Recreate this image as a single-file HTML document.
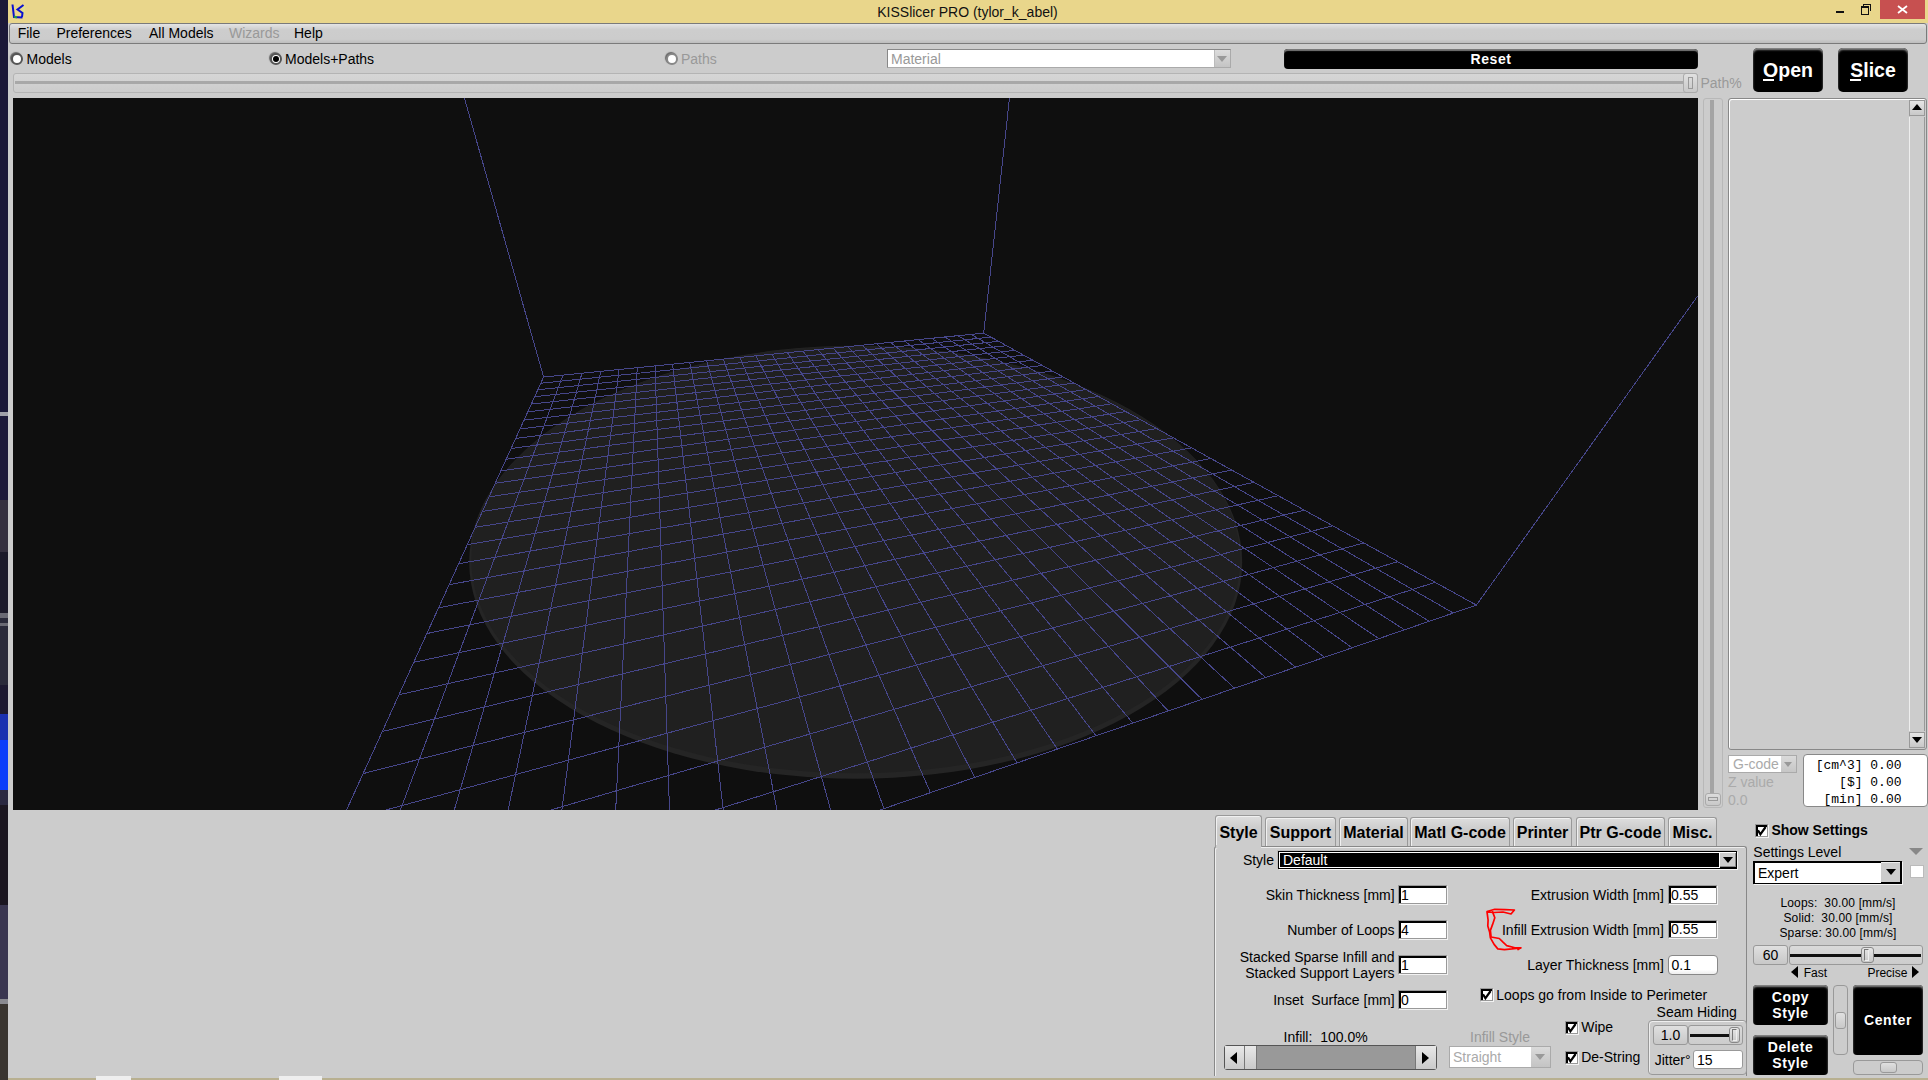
<!DOCTYPE html><html><head><meta charset="utf-8"><style>
html,body{margin:0;padding:0}
body{width:1928px;height:1080px;overflow:hidden;position:relative;background:#cccccc;font-family:"Liberation Sans", sans-serif}
.a{position:absolute;box-sizing:border-box}
.t{position:absolute;white-space:pre}
</style></head><body>
<div class="a" style="left:0px;top:0px;width:8px;height:412px;background:#1b1838"></div>
<div class="a" style="left:0px;top:412px;width:8px;height:4px;background:#a0a0a8"></div>
<div class="a" style="left:0px;top:416px;width:8px;height:84px;background:#1e1a3a"></div>
<div class="a" style="left:0px;top:500px;width:8px;height:52px;background:#35303f"></div>
<div class="a" style="left:0px;top:552px;width:8px;height:61px;background:#1c1a2a"></div>
<div class="a" style="left:0px;top:613px;width:8px;height:5px;background:#6a6a74"></div>
<div class="a" style="left:0px;top:618px;width:8px;height:5px;background:#2a2a3a"></div>
<div class="a" style="left:0px;top:623px;width:8px;height:3px;background:#6a6a74"></div>
<div class="a" style="left:0px;top:626px;width:8px;height:59px;background:#2a2a3a"></div>
<div class="a" style="left:0px;top:685px;width:8px;height:29px;background:#1c1830"></div>
<div class="a" style="left:0px;top:714px;width:8px;height:26px;background:#1a30b0"></div>
<div class="a" style="left:0px;top:740px;width:8px;height:50px;background:#0b3dfa"></div>
<div class="a" style="left:0px;top:790px;width:8px;height:15px;background:#2a2840"></div>
<div class="a" style="left:0px;top:805px;width:8px;height:100px;background:#1b1620"></div>
<div class="a" style="left:0px;top:905px;width:8px;height:94px;background:#3a3650"></div>
<div class="a" style="left:0px;top:999px;width:8px;height:5px;background:#8a8a90"></div>
<div class="a" style="left:0px;top:1004px;width:8px;height:76px;background:#3a3530"></div>
<div class="a" style="left:8px;top:0px;width:1920px;height:23px;background:#e9d68b"></div>
<div class="a" style="left:1880px;top:0px;width:45px;height:19px;background:#c75050"></div>
<div class="t" style="left:667.5px;width:600px;text-align:center;top:4.75px;font-size:14px;line-height:14px;font-weight:normal;color:#111;font-family:'Liberation Sans', sans-serif;">KISSlicer PRO (tylor_k_abel)</div>
<div class="a" style="left:1836px;top:11px;width:8px;height:2px;background:#111"></div>
<svg class="a" style="left:1860px;top:3px" width="14" height="13" shape-rendering="crispEdges"><path d="M1.5 3.5 H8.5 V11.5 H1.5 Z" stroke="#111" stroke-width="1" fill="none"/><path d="M1 3 H9 V5 H1 Z" fill="#111"/><path d="M3.5 3 V1.5 H10.5 V8 " stroke="#111" stroke-width="1" fill="none"/></svg>
<svg class="a" style="left:1880px;top:0px" width="45" height="19"><path d="M18 6 L27 13 M27 6 L18 13" stroke="#fff" stroke-width="1.8" fill="none"/></svg>
<svg class="a" style="left:8px;top:0px" width="20" height="22"><path d="M16 6 L15 15" stroke="#e0e890" stroke-width="3" opacity="0.6"/><path d="M4.5 4.5 L6 17 L14.5 17.5" stroke="#0a10d0" stroke-width="2" fill="none"/><path d="M15.5 5 L9.5 9.5 L14.5 13 L14 17" stroke="#0a10d0" stroke-width="2" fill="none"/><path d="M6 16.5 L9 17.5" stroke="#20a040" stroke-width="2"/></svg>
<div class="a" style="left:9px;top:23px;width:1918px;height:21px;background:linear-gradient(#e4e4e4,#cdcdcd 30%,#cccccc 80%,#bdbdbd);border:1px solid #7a7a7a;border-radius:3px"></div>
<div class="t" style="left:17.7px;top:25.85px;font-size:14px;line-height:14px;font-weight:normal;color:#000;font-family:'Liberation Sans', sans-serif;">File</div>
<div class="t" style="left:56.4px;top:25.85px;font-size:14px;line-height:14px;font-weight:normal;color:#000;font-family:'Liberation Sans', sans-serif;">Preferences</div>
<div class="t" style="left:149px;top:25.85px;font-size:14px;line-height:14px;font-weight:normal;color:#000;font-family:'Liberation Sans', sans-serif;">All Models</div>
<div class="t" style="left:229px;top:25.85px;font-size:14px;line-height:14px;font-weight:normal;color:#999;font-family:'Liberation Sans', sans-serif;">Wizards</div>
<div class="t" style="left:294px;top:25.85px;font-size:14px;line-height:14px;font-weight:normal;color:#000;font-family:'Liberation Sans', sans-serif;">Help</div>
<div class="a" style="left:10.5px;top:52.5px;width:12px;height:12px;border-radius:50%;background:#fff;border:2px solid #555;box-shadow:-1px -1px 1px #666"></div>
<div class="t" style="left:26.5px;top:51.75px;font-size:14px;line-height:14px;font-weight:normal;color:#000;font-family:'Liberation Sans', sans-serif;">Models</div>
<div class="a" style="left:269.5px;top:52.5px;width:12px;height:12px;border-radius:50%;background:#fff;border:2px solid #555;box-shadow:-1px -1px 1px #666"></div>
<div class="a" style="left:272.5px;top:55.5px;width:6px;height:6px;border-radius:50%;background:#000"></div>
<div class="t" style="left:285px;top:51.75px;font-size:14px;line-height:14px;font-weight:normal;color:#000;font-family:'Liberation Sans', sans-serif;">Models+Paths</div>
<div class="a" style="left:665.5px;top:52.5px;width:12px;height:12px;border-radius:50%;background:#fff;border:2px solid #888;box-shadow:-1px -1px 1px #666"></div>
<div class="t" style="left:681px;top:51.75px;font-size:14px;line-height:14px;font-weight:normal;color:#999;font-family:'Liberation Sans', sans-serif;">Paths</div>
<div class="a" style="left:887px;top:49px;width:344px;height:19px;background:#fff;border:1px solid #aaa;border-top-color:#888;border-left-color:#888"></div>
<div class="a" style="left:1214px;top:50px;width:16px;height:17px;background:linear-gradient(#dcdcdc,#c4c4c4);border-left:1px solid #bbb"></div>
<div class="a" style="left:1217px;top:56px;width:0;height:0;border-left:5px solid transparent;border-right:5px solid transparent;border-top:6px solid #999"></div>
<div class="t" style="left:891px;top:51.75px;font-size:14px;line-height:14px;font-weight:normal;color:#999;font-family:'Liberation Sans', sans-serif;">Material</div>
<div class="a" style="left:1284px;top:49px;width:414px;height:20px;background:#000;border-radius:4px;box-shadow:inset 0 2px 1px #777"></div>
<div class="t" style="left:1191px;width:600px;text-align:center;top:52.15px;font-size:14px;line-height:14px;font-weight:bold;color:#fff;font-family:'Liberation Sans', sans-serif;letter-spacing:0.6px">Reset</div>
<div class="a" style="left:13px;top:73px;width:1685px;height:20px;border:1px solid #b4b4b4;border-radius:3px;background:linear-gradient(#d6d6d6,#cccccc)"></div>
<div class="a" style="left:15px;top:81px;width:1675px;height:3px;background:#a8a8a8"></div>
<div class="a" style="left:1683px;top:73px;width:15px;height:20px;border:1px solid #aaa;border-radius:3px;background:linear-gradient(#e0e0e0,#c8c8c8)"></div>
<div class="a" style="left:1688px;top:77px;width:5px;height:12px;border:1px solid #999"></div>
<div class="t" style="left:1700.5px;top:76.15px;font-size:14px;line-height:14px;font-weight:normal;color:#999;font-family:'Liberation Sans', sans-serif;">Path%</div>
<div class="a" style="left:1753px;top:48px;width:70px;height:44px;background:#000;border-radius:5px;box-shadow:inset 0 2px 2px #888"></div>
<div class="a" style="left:1838px;top:48px;width:70px;height:44px;background:#000;border-radius:5px;box-shadow:inset 0 2px 2px #888"></div>
<div class="t" style="left:1488px;width:600px;text-align:center;top:60.79px;font-size:19.5px;line-height:19.5px;font-weight:bold;color:#fff;font-family:'Liberation Sans', sans-serif;">Open</div>
<div class="a" style="left:1763px;top:79px;width:11px;height:2px;background:#fff"></div>
<div class="t" style="left:1573px;width:600px;text-align:center;top:60.79px;font-size:19.5px;line-height:19.5px;font-weight:bold;color:#fff;font-family:'Liberation Sans', sans-serif;">Slice</div>
<div class="a" style="left:1850px;top:79px;width:11px;height:2px;background:#fff"></div>
<svg class="a" style="left:13px;top:98px" width="1685" height="712" viewBox="0 0 1685 712"><rect width="1685" height="712" fill="#0f0f0f"/><ellipse cx="842.7" cy="464.20000000000005" rx="386.5" ry="216.5" fill="#252525"/><ellipse cx="842.7" cy="461.70000000000005" rx="384.5" ry="213.5" fill="#202020"/><path d="M530.60 279.00L234.70 929.20M530.60 279.00L970.70 235.10M549.97 277.07L316.78 901.00M527.77 285.22L977.99 239.12M569.01 275.17L393.73 874.57M524.78 291.78L985.60 243.32M587.73 273.30L466.02 849.73M521.62 298.72L993.55 247.71M606.13 271.47L534.06 826.36M518.28 306.07L1001.87 252.31M624.23 269.66L598.21 804.32M514.73 313.87L1010.59 257.12M642.03 267.88L658.80 783.51M510.96 322.16L1019.74 262.17M659.54 266.14L716.12 763.81M506.94 330.98L1029.34 267.47M676.76 264.42L770.43 745.16M502.66 340.40L1039.43 273.04M693.71 262.73L821.95 727.46M498.08 350.46L1050.05 278.91M710.38 261.07L870.89 710.65M493.17 361.25L1061.25 285.09M726.79 259.43L917.45 694.65M487.89 372.85L1073.06 291.61M742.95 257.82L961.79 679.42M482.21 385.33L1085.55 298.51M758.85 256.23L1004.08 664.89M476.07 398.83L1098.77 305.80M774.50 254.67L1044.44 651.03M469.41 413.45L1112.80 313.55M789.92 253.13L1083.00 637.78M462.18 429.35L1127.69 321.77M805.09 251.62L1119.89 625.11M454.28 446.71L1143.54 330.52M820.04 250.13L1155.22 612.97M445.62 465.72L1160.45 339.85M834.77 248.66L1189.07 601.34M436.10 486.66L1178.52 349.83M849.27 247.21L1221.54 590.19M425.56 509.81L1197.88 360.52M863.56 245.79L1252.71 579.48M413.85 535.55L1218.67 371.99M877.64 244.38L1282.66 569.19M400.74 564.34L1241.05 384.35M891.52 243.00L1311.46 559.30M385.99 596.76L1265.21 397.69M905.19 241.63L1339.17 549.78M369.25 633.54L1291.39 412.14M918.67 240.29L1365.86 540.61M350.10 675.62L1319.83 427.84M931.96 238.96L1391.57 531.78M327.97 724.24L1350.84 444.96M945.05 237.66L1416.37 523.26M302.12 781.05L1384.80 463.71M957.97 236.37L1440.30 515.04M271.51 848.31L1422.14 484.32M970.70 235.10L1463.40 507.10M234.70 929.20L1463.40 507.10M530.60 279.00L451.40 0M970.70 235.10L996.50 0M1463.40 507.10L1684.60 198.10" stroke="#46468a" stroke-width="1" fill="none" shape-rendering="crispEdges"/></svg>
<div class="a" style="left:1703px;top:98px;width:20px;height:710px;border:1px solid #b8b8b8;border-radius:3px;background:#cccccc"></div>
<div class="a" style="left:1710px;top:100px;width:4px;height:695px;background:#a4a4a4"></div>
<div class="a" style="left:1705px;top:793px;width:16px;height:13px;border:1px solid #aaa;border-radius:3px;background:linear-gradient(#dcdcdc,#c8c8c8)"></div>
<div class="a" style="left:1708px;top:797px;width:10px;height:4px;border:1px solid #999"></div>
<div class="a" style="left:1728px;top:98px;width:199px;height:652px;border:1px solid #888;border-radius:3px;background:#cccccc;box-shadow:inset 1px 1px 0 #fff"></div>
<div class="a" style="left:1909px;top:100px;width:16px;height:16px;border:1px solid #999;background:linear-gradient(#e6e6e6,#c8c8c8)"></div>
<div class="a" style="left:1912px;top:104px;width:0;height:0;border-left:5px solid transparent;border-right:5px solid transparent;border-bottom:6px solid #000"></div>
<div class="a" style="left:1909px;top:117px;width:16px;height:614px;border-left:1px solid #eee;border-right:1px solid #999;background:#cccccc"></div>
<div class="a" style="left:1909px;top:732px;width:16px;height:16px;border:1px solid #999;background:linear-gradient(#e6e6e6,#c8c8c8)"></div>
<div class="a" style="left:1912px;top:737px;width:0;height:0;border-left:5px solid transparent;border-right:5px solid transparent;border-top:6px solid #000"></div>
<div class="a" style="left:1728px;top:755px;width:69px;height:18px;background:#fff;border:1px solid #aaa"></div>
<div class="a" style="left:1781px;top:756px;width:15px;height:16px;background:linear-gradient(#dadada,#c6c6c6)"></div>
<div class="a" style="left:1784px;top:762px;width:0;height:0;border-left:4px solid transparent;border-right:4px solid transparent;border-top:5px solid #999"></div>
<div class="t" style="left:1733px;top:757.15px;font-size:14px;line-height:14px;font-weight:normal;color:#aaa;font-family:'Liberation Sans', sans-serif;">G-code</div>
<div class="t" style="left:1728px;top:775.15px;font-size:14px;line-height:14px;font-weight:normal;color:#aaa;font-family:'Liberation Sans', sans-serif;">Z value</div>
<div class="t" style="left:1728px;top:792.55px;font-size:14px;line-height:14px;font-weight:normal;color:#aaa;font-family:'Liberation Sans', sans-serif;">0.0</div>
<div class="a" style="left:1803px;top:754px;width:125px;height:53px;background:#fff;border:1px solid #888;border-radius:4px"></div>
<div class="t" style="right:26.5px;top:758.50px;font-size:13px;line-height:13px;font-weight:normal;color:#000;font-family:'Liberation Mono', monospace;">[cm^3] 0.00</div>
<div class="t" style="right:26.5px;top:775.50px;font-size:13px;line-height:13px;font-weight:normal;color:#000;font-family:'Liberation Mono', monospace;">[$] 0.00</div>
<div class="t" style="right:26.5px;top:792.80px;font-size:13px;line-height:13px;font-weight:normal;color:#000;font-family:'Liberation Mono', monospace;">[min] 0.00</div>
<div class="a" style="left:1755px;top:823.5px;width:13px;height:13.0px;background:#fff;border:1px solid #999;box-shadow:inset 2px 2px 0 #000,1px 1px 0 #f2f2f2"></div>
<svg class="a" style="left:1755px;top:823.5px" width="13" height="13"><path d="M3 6.3 L5.4 10.3 L10.6 3" stroke="#000" stroke-width="2.2" fill="none"/></svg>
<div class="t" style="left:1771.4px;top:823.15px;font-size:14px;line-height:14px;font-weight:bold;color:#000;font-family:'Liberation Sans', sans-serif;">Show Settings</div>
<div class="a" style="left:1214px;top:846px;width:533px;height:230px;border:1px solid #888;border-bottom:none;border-radius:3px 3px 0 0;box-shadow:inset 1px 1px 0 #eee"></div>
<div class="a" style="left:1215px;top:815px;width:47px;height:32px;border:1px solid #999;border-bottom:none;border-radius:3px 3px 0 0;background:linear-gradient(#dedede,#cccccc 40%);box-shadow:inset 1px 1px 0 #f0f0f0"></div>
<div class="t" style="left:938.5px;width:600px;text-align:center;top:824.66px;font-size:16px;line-height:16px;font-weight:bold;color:#000;font-family:'Liberation Sans', sans-serif;">Style</div>
<div class="a" style="left:1265px;top:817px;width:71px;height:29px;border:1px solid #999;border-bottom:none;border-radius:3px 3px 0 0;background:linear-gradient(#dedede,#cccccc 40%);box-shadow:inset 1px 1px 0 #f0f0f0"></div>
<div class="t" style="left:1000.5px;width:600px;text-align:center;top:824.66px;font-size:16px;line-height:16px;font-weight:bold;color:#000;font-family:'Liberation Sans', sans-serif;">Support</div>
<div class="a" style="left:1339px;top:817px;width:69px;height:29px;border:1px solid #999;border-bottom:none;border-radius:3px 3px 0 0;background:linear-gradient(#dedede,#cccccc 40%);box-shadow:inset 1px 1px 0 #f0f0f0"></div>
<div class="t" style="left:1073.5px;width:600px;text-align:center;top:824.66px;font-size:16px;line-height:16px;font-weight:bold;color:#000;font-family:'Liberation Sans', sans-serif;">Material</div>
<div class="a" style="left:1410px;top:817px;width:100px;height:29px;border:1px solid #999;border-bottom:none;border-radius:3px 3px 0 0;background:linear-gradient(#dedede,#cccccc 40%);box-shadow:inset 1px 1px 0 #f0f0f0"></div>
<div class="t" style="left:1160.0px;width:600px;text-align:center;top:824.66px;font-size:16px;line-height:16px;font-weight:bold;color:#000;font-family:'Liberation Sans', sans-serif;">Matl G-code</div>
<div class="a" style="left:1513px;top:817px;width:59px;height:29px;border:1px solid #999;border-bottom:none;border-radius:3px 3px 0 0;background:linear-gradient(#dedede,#cccccc 40%);box-shadow:inset 1px 1px 0 #f0f0f0"></div>
<div class="t" style="left:1242.5px;width:600px;text-align:center;top:824.66px;font-size:16px;line-height:16px;font-weight:bold;color:#000;font-family:'Liberation Sans', sans-serif;">Printer</div>
<div class="a" style="left:1576px;top:817px;width:89px;height:29px;border:1px solid #999;border-bottom:none;border-radius:3px 3px 0 0;background:linear-gradient(#dedede,#cccccc 40%);box-shadow:inset 1px 1px 0 #f0f0f0"></div>
<div class="t" style="left:1320.5px;width:600px;text-align:center;top:824.66px;font-size:16px;line-height:16px;font-weight:bold;color:#000;font-family:'Liberation Sans', sans-serif;">Ptr G-code</div>
<div class="a" style="left:1668px;top:817px;width:49px;height:29px;border:1px solid #999;border-bottom:none;border-radius:3px 3px 0 0;background:linear-gradient(#dedede,#cccccc 40%);box-shadow:inset 1px 1px 0 #f0f0f0"></div>
<div class="t" style="left:1392.5px;width:600px;text-align:center;top:824.66px;font-size:16px;line-height:16px;font-weight:bold;color:#000;font-family:'Liberation Sans', sans-serif;">Misc.</div>
<div class="a" style="left:1216px;top:845px;width:45px;height:3px;background:#cccccc"></div>
<div class="t" style="right:654px;top:852.65px;font-size:14px;line-height:14px;font-weight:normal;color:#000;font-family:'Liberation Sans', sans-serif;">Style</div>
<div class="a" style="left:1278px;top:851px;width:459px;height:18px;background:#000;border:1px solid #000;box-shadow:1px 1px 0 #f4f4f4,-1px -1px 0 #bbb"></div>
<div class="a" style="left:1279px;top:852px;width:457px;height:1px;background:#fff"></div>
<div class="a" style="left:1279px;top:852px;width:1px;height:16px;background:#fff"></div>
<div class="a" style="left:1279px;top:867px;width:441px;height:1px;background:#fff"></div>
<div class="a" style="left:1719px;top:852px;width:1px;height:16px;background:#fff"></div>
<div class="a" style="left:1720px;top:853px;width:16px;height:14px;background:#cccccc;box-shadow:inset -1px -1px 0 #888"></div>
<div class="a" style="left:1722.5px;top:857px;width:0;height:0;border-left:5px solid transparent;border-right:5px solid transparent;border-top:6px solid #000"></div>
<div class="t" style="left:1283px;top:852.65px;font-size:14px;line-height:14px;font-weight:normal;color:#fff;font-family:'Liberation Sans', sans-serif;">Default</div>
<div class="t" style="right:533.4000000000001px;top:888.15px;font-size:14px;line-height:14px;font-weight:normal;color:#000;font-family:'Liberation Sans', sans-serif;">Skin Thickness [mm]</div>
<div class="a" style="left:1398px;top:885px;width:49px;height:19px;background:#fff;border:1px solid #999;box-shadow:inset 2px 2px 0 #000,1px 1px 0 #f2f2f2"></div>
<div class="t" style="left:1401px;top:887.65px;font-size:14px;line-height:14px;font-weight:normal;color:#000;font-family:'Liberation Sans', sans-serif;">1</div>
<div class="t" style="right:533.4000000000001px;top:923.15px;font-size:14px;line-height:14px;font-weight:normal;color:#000;font-family:'Liberation Sans', sans-serif;">Number of Loops</div>
<div class="a" style="left:1398px;top:920px;width:49px;height:19px;background:#fff;border:1px solid #999;box-shadow:inset 2px 2px 0 #000,1px 1px 0 #f2f2f2"></div>
<div class="t" style="left:1401px;top:922.65px;font-size:14px;line-height:14px;font-weight:normal;color:#000;font-family:'Liberation Sans', sans-serif;">4</div>
<div class="t" style="right:533.4000000000001px;top:949.95px;font-size:14px;line-height:14px;font-weight:normal;color:#000;font-family:'Liberation Sans', sans-serif;">Stacked Sparse Infill and</div>
<div class="t" style="right:533.4000000000001px;top:965.95px;font-size:14px;line-height:14px;font-weight:normal;color:#000;font-family:'Liberation Sans', sans-serif;">Stacked Support Layers</div>
<div class="a" style="left:1398px;top:955px;width:49px;height:19px;background:#fff;border:1px solid #999;box-shadow:inset 2px 2px 0 #000,1px 1px 0 #f2f2f2"></div>
<div class="t" style="left:1401px;top:957.65px;font-size:14px;line-height:14px;font-weight:normal;color:#000;font-family:'Liberation Sans', sans-serif;">1</div>
<div class="t" style="right:533.4000000000001px;top:993.45px;font-size:14px;line-height:14px;font-weight:normal;color:#000;font-family:'Liberation Sans', sans-serif;">Inset  Surface [mm]</div>
<div class="a" style="left:1398px;top:990px;width:49px;height:19px;background:#fff;border:1px solid #999;box-shadow:inset 2px 2px 0 #000,1px 1px 0 #f2f2f2"></div>
<div class="t" style="left:1401px;top:992.65px;font-size:14px;line-height:14px;font-weight:normal;color:#000;font-family:'Liberation Sans', sans-serif;">0</div>
<div class="t" style="right:264.20000000000005px;top:888.45px;font-size:14px;line-height:14px;font-weight:normal;color:#000;font-family:'Liberation Sans', sans-serif;">Extrusion Width [mm]</div>
<div class="a" style="left:1668px;top:885px;width:49px;height:19px;background:#fff;border:1px solid #999;box-shadow:inset 2px 2px 0 #000,1px 1px 0 #f2f2f2"></div>
<div class="t" style="left:1671px;top:887.65px;font-size:14px;line-height:14px;font-weight:normal;color:#000;font-family:'Liberation Sans', sans-serif;">0.55</div>
<div class="t" style="right:264.20000000000005px;top:922.95px;font-size:14px;line-height:14px;font-weight:normal;color:#000;font-family:'Liberation Sans', sans-serif;">Infill Extrusion Width [mm]</div>
<div class="a" style="left:1668px;top:920px;width:49px;height:18px;background:#fff;border:1px solid #999;box-shadow:inset 2px 2px 0 #000,1px 1px 0 #f2f2f2"></div>
<div class="t" style="left:1671px;top:921.65px;font-size:14px;line-height:14px;font-weight:normal;color:#000;font-family:'Liberation Sans', sans-serif;">0.55</div>
<div class="t" style="right:264.20000000000005px;top:957.95px;font-size:14px;line-height:14px;font-weight:normal;color:#000;font-family:'Liberation Sans', sans-serif;">Layer Thickness [mm]</div>
<div class="a" style="left:1668px;top:955px;width:50px;height:20px;background:linear-gradient(#fff 75%,#eee);border:1px solid #888;border-radius:4px"></div>
<div class="t" style="left:1671.5px;top:957.65px;font-size:14px;line-height:14px;font-weight:normal;color:#000;font-family:'Liberation Sans', sans-serif;">0.1</div>
<svg class="a" style="left:1480px;top:904px" width="50" height="50"><path d="M7.0 7.5 L14.8 5.3 L25.0 5.6 L34.4 6.0 L31.0 10.0 L23.0 8.0 L14.0 8.5 L7.0 7.9 L8.1 16.0 L7.8 21.9 L9.6 27.9 L10.4 33.8 L14.1 40.4 L17.8 44.9 L24.4 45.6 L31.9 44.9 L40.7 43.8" stroke="#f00" stroke-width="1.7" fill="none" stroke-linejoin="round" stroke-linecap="round"/><path d="M12.6 7.9 L14.8 13.8 L12.6 20.4 L10.4 26.4 L11.1 33.0 L19.3 34.5 L23.0 38.2 L26.7 41.6 L34.8 43.8 L40.7 43.8 L38.0 45.5" stroke="#f00" stroke-width="1.7" fill="none" stroke-linejoin="round" stroke-linecap="round"/></svg>
<div class="a" style="left:1480px;top:988px;width:13px;height:13px;background:#fff;border:1px solid #999;box-shadow:inset 2px 2px 0 #000,1px 1px 0 #f2f2f2"></div>
<svg class="a" style="left:1480px;top:988px" width="13" height="13"><path d="M3 6.3 L5.4 10.3 L10.6 3" stroke="#000" stroke-width="2.2" fill="none"/></svg>
<div class="t" style="left:1496.3px;top:987.85px;font-size:14px;line-height:14px;font-weight:normal;color:#000;font-family:'Liberation Sans', sans-serif;">Loops go from Inside to Perimeter</div>
<div class="t" style="right:191.29999999999995px;top:1004.75px;font-size:14px;line-height:14px;font-weight:normal;color:#000;font-family:'Liberation Sans', sans-serif;">Seam Hiding</div>
<div class="t" style="left:1200px;width:600px;text-align:center;top:1029.75px;font-size:14px;line-height:14px;font-weight:normal;color:#999;font-family:'Liberation Sans', sans-serif;">Infill Style</div>
<div class="a" style="left:1449px;top:1046px;width:102px;height:22px;background:#fff;border:1px solid #aaa"></div>
<div class="a" style="left:1531px;top:1047px;width:19px;height:20px;background:linear-gradient(#dadada,#c4c4c4)"></div>
<div class="a" style="left:1535px;top:1054px;width:0;height:0;border-left:5px solid transparent;border-right:5px solid transparent;border-top:6px solid #999"></div>
<div class="t" style="left:1453px;top:1050.15px;font-size:14px;line-height:14px;font-weight:normal;color:#aaa;font-family:'Liberation Sans', sans-serif;">Straight</div>
<div class="a" style="left:1565px;top:1021px;width:13px;height:13px;background:#fff;border:1px solid #999;box-shadow:inset 2px 2px 0 #000,1px 1px 0 #f2f2f2"></div>
<svg class="a" style="left:1565px;top:1021px" width="13" height="13"><path d="M3 6.3 L5.4 10.3 L10.6 3" stroke="#000" stroke-width="2.2" fill="none"/></svg>
<div class="t" style="left:1581.2px;top:1020.15px;font-size:14px;line-height:14px;font-weight:normal;color:#000;font-family:'Liberation Sans', sans-serif;">Wipe</div>
<div class="a" style="left:1565px;top:1051px;width:13px;height:13px;background:#fff;border:1px solid #999;box-shadow:inset 2px 2px 0 #000,1px 1px 0 #f2f2f2"></div>
<svg class="a" style="left:1565px;top:1051px" width="13" height="13"><path d="M3 6.3 L5.4 10.3 L10.6 3" stroke="#000" stroke-width="2.2" fill="none"/></svg>
<div class="t" style="left:1581.2px;top:1050.15px;font-size:14px;line-height:14px;font-weight:normal;color:#000;font-family:'Liberation Sans', sans-serif;">De-String</div>
<div class="a" style="left:1648px;top:1020px;width:99px;height:55px;border:1px solid #999;border-radius:4px;box-shadow:inset 1px 1px 0 #eee"></div>
<div class="a" style="left:1653px;top:1025px;width:35px;height:20px;border:1px solid #999;border-radius:3px;background:linear-gradient(#e0e0e0,#c8c8c8)"></div>
<div class="t" style="left:1370.5px;width:600px;text-align:center;top:1028.15px;font-size:14px;line-height:14px;font-weight:normal;color:#000;font-family:'Liberation Sans', sans-serif;">1.0</div>
<div class="a" style="left:1688px;top:1025px;width:55px;height:20px;border:1px solid #999;border-radius:3px;background:linear-gradient(#dadada,#cccccc)"></div>
<div class="a" style="left:1690px;top:1034px;width:42px;height:3px;background:#111"></div>
<div class="a" style="left:1728.5px;top:1027px;width:11.5px;height:16px;border:1px solid #888;border-radius:3px;background:linear-gradient(#e6e6e6,#c8c8c8)"></div>
<div class="a" style="left:1731.5px;top:1029px;width:5.0px;height:12px;border:1px solid #777;border-right-color:#eee;border-bottom-color:#eee"></div>
<div class="t" style="left:1654.7px;top:1053.05px;font-size:14px;line-height:14px;font-weight:normal;color:#000;font-family:'Liberation Sans', sans-serif;">Jitter°</div>
<div class="a" style="left:1693px;top:1050px;width:50px;height:19px;background:#fff;border:1px solid #999;border-radius:3px"></div>
<div class="t" style="left:1697px;top:1053.05px;font-size:14px;line-height:14px;font-weight:normal;color:#000;font-family:'Liberation Sans', sans-serif;">15</div>
<div class="t" style="left:1025.6px;width:600px;text-align:center;top:1029.85px;font-size:14px;line-height:14px;font-weight:normal;color:#000;font-family:'Liberation Sans', sans-serif;">Infill:  100.0%</div>
<div class="a" style="left:1224px;top:1045px;width:213px;height:25px;border:1px solid #555;border-radius:3px;background:#999"></div>
<div class="a" style="left:1225px;top:1046px;width:20px;height:23px;background:linear-gradient(#e8e8e8,#cacaca);border-right:1px solid #777"></div>
<div class="a" style="left:1245px;top:1046px;width:12px;height:23px;background:linear-gradient(#e8e8e8,#cacaca);border-right:1px solid #777"></div>
<div class="a" style="left:1415px;top:1046px;width:21px;height:23px;background:linear-gradient(#e8e8e8,#cacaca);border-left:1px solid #777"></div>
<div class="a" style="left:1230px;top:1052px;width:0;height:0;border-top:6px solid transparent;border-bottom:6px solid transparent;border-right:7px solid #000"></div>
<div class="a" style="left:1422px;top:1052px;width:0;height:0;border-top:6px solid transparent;border-bottom:6px solid transparent;border-left:7px solid #000"></div>
<div class="t" style="left:1753.3px;top:844.85px;font-size:14px;line-height:14px;font-weight:normal;color:#000;font-family:'Liberation Sans', sans-serif;">Settings Level</div>
<div class="a" style="left:1909px;top:848px;width:0;height:0;border-left:7px solid transparent;border-right:7px solid transparent;border-top:7px solid #888"></div>
<div class="a" style="left:1753px;top:861px;width:149px;height:23px;background:#fff;border:1px solid #000;box-shadow:inset 1px 1px 0 #000,1px 1px 0 #f4f4f4"></div>
<div class="a" style="left:1881px;top:862px;width:20px;height:21px;background:#cccccc;box-shadow:inset -1px -1px 0 #000,inset 0 1px 0 #eee"></div>
<div class="a" style="left:1886px;top:869px;width:0;height:0;border-left:5px solid transparent;border-right:5px solid transparent;border-top:6px solid #000"></div>
<div class="t" style="left:1758px;top:866.15px;font-size:14px;line-height:14px;font-weight:normal;color:#000;font-family:'Liberation Sans', sans-serif;">Expert</div>
<div class="a" style="left:1910px;top:865px;width:14px;height:13px;background:#fff;border:1px solid #bbb"></div>
<div class="t" style="left:1538px;width:600px;text-align:center;top:896.84px;font-size:12px;line-height:12px;font-weight:normal;color:#000;font-family:'Liberation Sans', sans-serif;letter-spacing:0.15px">Loops:  30.00 [mm/s]</div>
<div class="t" style="left:1538px;width:600px;text-align:center;top:911.84px;font-size:12px;line-height:12px;font-weight:normal;color:#000;font-family:'Liberation Sans', sans-serif;letter-spacing:0.15px">Solid:  30.00 [mm/s]</div>
<div class="t" style="left:1538px;width:600px;text-align:center;top:926.54px;font-size:12px;line-height:12px;font-weight:normal;color:#000;font-family:'Liberation Sans', sans-serif;letter-spacing:0.15px">Sparse: 30.00 [mm/s]</div>
<div class="a" style="left:1753px;top:945px;width:35px;height:20px;border:1px solid #999;border-radius:3px;background:linear-gradient(#e0e0e0,#c8c8c8)"></div>
<div class="t" style="left:1470.5px;width:600px;text-align:center;top:948.15px;font-size:14px;line-height:14px;font-weight:normal;color:#000;font-family:'Liberation Sans', sans-serif;">60</div>
<div class="a" style="left:1789px;top:945px;width:134px;height:20px;border:1px solid #999;border-radius:3px;background:linear-gradient(#dadada,#cccccc)"></div>
<div class="a" style="left:1790px;top:954px;width:131px;height:3px;background:#111"></div>
<div class="a" style="left:1861px;top:947px;width:13px;height:16px;border:1px solid #888;border-radius:3px;background:linear-gradient(#e6e6e6,#c8c8c8)"></div>
<div class="a" style="left:1864px;top:949px;width:5px;height:12px;border:1px solid #777;border-right-color:#eee;border-bottom-color:#eee"></div>
<div class="a" style="left:1791px;top:966px;width:0;height:0;border-top:6px solid transparent;border-bottom:6px solid transparent;border-right:7px solid #000"></div>
<div class="t" style="left:1803.7px;top:966.54px;font-size:12px;line-height:12px;font-weight:normal;color:#000;font-family:'Liberation Sans', sans-serif;">Fast</div>
<div class="t" style="right:20.59999999999991px;top:966.54px;font-size:12px;line-height:12px;font-weight:normal;color:#000;font-family:'Liberation Sans', sans-serif;">Precise</div>
<div class="a" style="left:1912px;top:966px;width:0;height:0;border-top:6px solid transparent;border-bottom:6px solid transparent;border-left:7px solid #000"></div>
<div class="a" style="left:1753px;top:985px;width:75px;height:40px;background:#000;border-radius:4px;box-shadow:inset 0 2px 2px #888"></div>
<div class="t" style="left:1490.5px;width:600px;text-align:center;top:990.15px;font-size:14px;line-height:14px;font-weight:bold;color:#fff;font-family:'Liberation Sans', sans-serif;letter-spacing:0.6px">Copy</div>
<div class="t" style="left:1490.5px;width:600px;text-align:center;top:1006.15px;font-size:14px;line-height:14px;font-weight:bold;color:#fff;font-family:'Liberation Sans', sans-serif;letter-spacing:0.6px">Style</div>
<div class="a" style="left:1753px;top:1035px;width:75px;height:40px;background:#000;border-radius:4px;box-shadow:inset 0 2px 2px #888"></div>
<div class="t" style="left:1490.5px;width:600px;text-align:center;top:1040.15px;font-size:14px;line-height:14px;font-weight:bold;color:#fff;font-family:'Liberation Sans', sans-serif;letter-spacing:0.6px">Delete</div>
<div class="t" style="left:1490.5px;width:600px;text-align:center;top:1056.15px;font-size:14px;line-height:14px;font-weight:bold;color:#fff;font-family:'Liberation Sans', sans-serif;letter-spacing:0.6px">Style</div>
<div class="a" style="left:1833px;top:985px;width:15px;height:70px;border:1px solid #999;border-radius:4px;background:#cccccc"></div>
<div class="a" style="left:1835px;top:1012px;width:11px;height:17px;border:1px solid #999;border-radius:3px;background:linear-gradient(#e0e0e0,#c8c8c8)"></div>
<div class="a" style="left:1853px;top:985px;width:70px;height:70px;background:#000;border-radius:4px;box-shadow:inset 0 2px 2px #888"></div>
<div class="t" style="left:1588px;width:600px;text-align:center;top:1013.15px;font-size:14px;line-height:14px;font-weight:bold;color:#fff;font-family:'Liberation Sans', sans-serif;letter-spacing:0.6px">Center</div>
<div class="a" style="left:1853px;top:1060px;width:70px;height:15px;border:1px solid #999;border-radius:4px;background:#cccccc"></div>
<div class="a" style="left:1880px;top:1062px;width:17px;height:11px;border:1px solid #999;border-radius:3px;background:linear-gradient(#e0e0e0,#c8c8c8)"></div>
<div class="a" style="left:8px;top:1078px;width:1920px;height:2px;background:#b8b090"></div>
<div class="a" style="left:96px;top:1076px;width:35px;height:4px;background:#eee"></div>
<div class="a" style="left:279px;top:1076px;width:43px;height:4px;background:#eee"></div>
</body></html>
